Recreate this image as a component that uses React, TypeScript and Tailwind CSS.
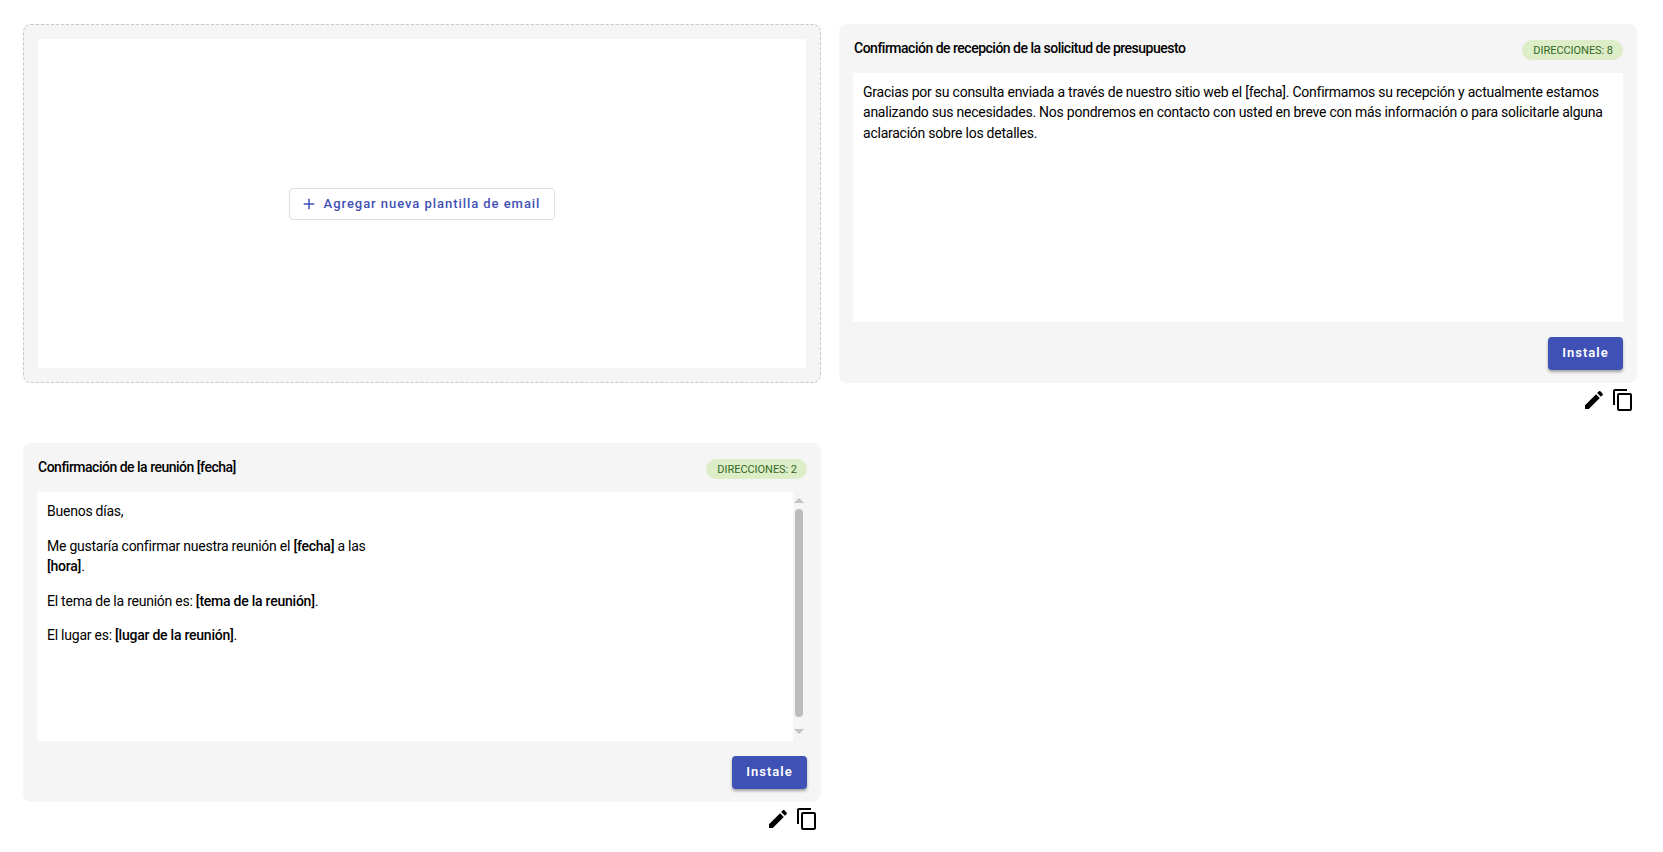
const EDIT = 'M3 17.25V21h3.75L17.81 9.94l-3.75-3.75L3 17.25zM20.71 7.04c.39-.39.39-1.02 0-1.41l-2.34-2.34c-.39-.39-1.02-.39-1.41 0l-1.83 1.83 3.75 3.75 1.83-1.83z';
const COPY = 'M16 1H4c-1.1 0-2 .9-2 2v14h2V3h12V1zm3 4H8c-1.1 0-2 .9-2 2v14c0 1.1.9 2 2 2h11c1.1 0 2-.9 2-2V7c0-1.1-.9-2-2-2zm0 16H8V7h11v14z';
const ADD = 'M19 13h-6v6h-2v-6H5v-2h6V5h2v6h6v2z';

function Icon({ d }: { d: string }) {
  return (
    <svg viewBox="0 0 24 24" className="w-6 h-6 fill-black">
      <path d={d} />
    </svg>
  );
}

function Scrollbar() {
  return (
    <div className="w-[14px] shrink-0 flex flex-col items-center pr-[2px] pt-[6px] pb-[7px]">
      <div className="w-0 h-0 border-x-[5px] border-x-transparent border-b-[5px] border-b-[#c4c4c4]" />
      <div className="w-[8px] flex-1 mt-[6px] mb-[12px] rounded-full bg-[#bcbcbc]" />
      <div className="w-0 h-0 border-x-[5px] border-x-transparent border-t-[5px] border-t-[#c4c4c4]" />
    </div>
  );
}

function TemplateCard({
  title,
  count,
  scroll,
  children,
}: {
  title: string;
  count: number;
  scroll?: boolean;
  children: React.ReactNode;
}) {
  return (
    <div>
      <div className="h-[359px] rounded-lg bg-[#f5f5f5] px-[14px] flex flex-col">
        <div className="h-[49px] shrink-0 flex items-start justify-between">
          <h3 className="mt-[14px] ml-[1px] text-sm leading-5 font-medium tracking-[-0.5px] text-black">{title}</h3>
          <span className="mt-[16px] h-5 pt-px pl-[11px] pr-[10px] rounded-full bg-[#dcedc8] text-[#33691e] text-[11px] leading-5 tracking-[-0.05px]">
            DIRECCIONES: {count}
          </span>
        </div>
        <div className="h-[249px] shrink-0 flex">
          <div className="flex-1 bg-white px-[10px] py-[9px] text-sm leading-[20.3px] tracking-[-0.24px] text-black">{children}</div>
          {scroll && <Scrollbar />}
        </div>
        <div className="flex justify-end pt-[15px]">
          <button className="h-[33px] w-[75px] pb-[2px] rounded bg-[#3f51b5] text-white text-[13px] font-semibold tracking-[1px] shadow-[0_2px_3px_rgba(0,0,0,0.35)]">
            Instale
          </button>
        </div>
      </div>
      <div className="flex justify-end gap-[5px] mt-[5px] mr-[2px]">
        <Icon d={EDIT} />
        <Icon d={COPY} />
      </div>
    </div>
  );
}

export default function App() {
  return (
    <div className="min-h-screen bg-white pt-6 pl-[23px] font-['Roboto',sans-serif]">
      <div className="grid grid-cols-[798px_798px] gap-x-[18px] gap-y-[31px] items-start">
        <div className="h-[359px] rounded-lg border border-dashed border-[#c8c8c8] bg-[#f5f5f5] p-[14px]">
          <div className="h-full bg-white flex items-center justify-center">
            <button className="h-[32px] w-[266px] pr-[4px] flex items-center justify-center gap-[6px] rounded border border-[#e0e0e0] bg-white text-[#3f51b5] text-[13px] font-medium tracking-[0.95px]">
              <svg viewBox="0 0 24 24" className="w-[18px] h-[18px] fill-[#3f51b5]">
                <path d={ADD} />
              </svg>
              Agregar nueva plantilla de email
            </button>
          </div>
        </div>

        <TemplateCard title="Confirmación de recepción de la solicitud de presupuesto" count={8}>
          Gracias por su consulta enviada a través de nuestro sitio web el [fecha]. Confirmamos su recepción y actualmente estamos analizando sus necesidades. Nos pondremos en contacto con usted en breve con más información o para solicitarle alguna aclaración sobre los detalles.
        </TemplateCard>

        <TemplateCard title="Confirmación de la reunión [fecha]" count={2} scroll>
          <p>Buenos días,</p>
          <p className="mt-[14.4px]">
            Me gustaría confirmar nuestra reunión el <b className="font-medium">[fecha]</b> a las
            <br />
            <b className="font-medium">[hora]</b>.
          </p>
          <p className="mt-[14.4px]">
            El tema de la reunión es: <b className="font-medium">[tema de la reunión]</b>.
          </p>
          <p className="mt-[14.4px]">
            El lugar es: <b className="font-medium">[lugar de la reunión]</b>.
          </p>
        </TemplateCard>
      </div>
    </div>
  );
}
